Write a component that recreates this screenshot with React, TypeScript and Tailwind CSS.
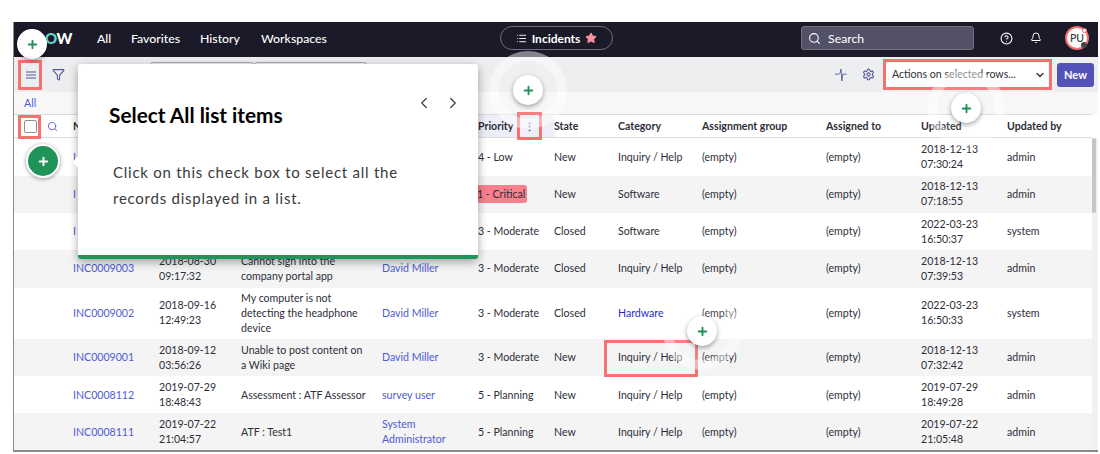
import { Bell, ChevronDown, ChevronLeft, ChevronRight, CircleHelp, Filter, List, Plus, Search, Settings, Star } from "lucide-react"

const cols = "grid grid-cols-[59px_86px_82px_141px_96px_76px_64px_84px_124px_95px_86px_1fr] items-center"

// first three rows sit behind the popover, only their leading letter shows
const rows = [
  { num: "I", opened: "", desc: "", caller: "", priority: "4 - Low", state: "New", category: "Inquiry / Help", updated: "2018-12-13\n07:30:24", by: "admin", h: "h-[38px]" },
  { num: "I", opened: "", desc: "", caller: "", priority: "1 - Critical", state: "New", category: "Software", updated: "2018-12-13\n07:18:55", by: "admin", h: "h-[37px] pb-px" },
  { num: "I", opened: "", desc: "", caller: "", priority: "3 - Moderate", state: "Closed", category: "Software", updated: "2022-03-23\n16:50:37", by: "system", h: "h-[37px]" },
  { num: "INC0009003", opened: "2018-08-30\n09:17:32", desc: "Cannot sign into the\ncompany portal app", caller: "David Miller", priority: "3 - Moderate", state: "Closed", category: "Inquiry / Help", updated: "2018-12-13\n07:39:53", by: "admin", h: "h-[38px] pb-px" },
  { num: "INC0009002", opened: "2018-09-16\n12:49:23", desc: "My computer is not\ndetecting the headphone\ndevice", caller: "David Miller", priority: "3 - Moderate", state: "Closed", category: "Hardware", updated: "2022-03-23\n16:50:33", by: "system", h: "h-[51px] pb-px" },
  { num: "INC0009001", opened: "2018-09-12\n03:56:26", desc: "Unable to post content on\na Wiki page", caller: "David Miller", priority: "3 - Moderate", state: "New", category: "Inquiry / Help", updated: "2018-12-13\n07:32:42", by: "admin", h: "h-[37px]" },
  { num: "INC0008112", opened: "2019-07-29\n18:48:43", desc: "Assessment : ATF Assessor", caller: "survey user", priority: "5 - Planning", state: "New", category: "Inquiry / Help", updated: "2019-07-29\n18:49:28", by: "admin", h: "h-[37px] pt-px" },
  { num: "INC0008111", opened: "2019-07-22\n21:04:57", desc: "ATF : Test1", caller: "System\nAdministrator", priority: "5 - Planning", state: "New", category: "Inquiry / Help", updated: "2019-07-22\n21:05:48", by: "admin", h: "h-[37px] pt-px" },
]

function Hotspot({ className, halo }: { className: string; halo?: boolean }) {
  return (
    <div className={`absolute flex h-[30px] w-[30px] items-center justify-center ${className}`}>
      {halo && <div className="absolute h-[78px] w-[78px] rounded-full border-[10px] border-white/40 bg-white/10" />}
      <div className="relative flex h-[30px] w-[30px] items-center justify-center rounded-full bg-white shadow-[0_2px_5px_rgba(0,0,0,0.35)]">
        <Plus size={13} strokeWidth={3.5} className="text-[#1f9459]" />
      </div>
    </div>
  )
}

export default function App() {
  return (
    <div className="relative h-[454px] w-[1100px] overflow-hidden bg-white pl-[13px] pt-[22px] font-['Lato',sans-serif] text-[10.6px] leading-[15px] text-[#2e2e38]">
      <div className="w-[1085px] border-b-2 border-l border-[#8b8b8b]">
        {/* Top nav */}
        <div className="flex h-[35px] items-center bg-[#1a1a29] pb-[3px] text-[12.3px] font-medium text-white">
          <span className="ml-[31px] w-[52px] text-[15px] font-black tracking-tight text-white">
            <span className="text-[#62d8c4]">O</span>W
          </span>
          <span className="w-[34px]">All</span>
          <span className="w-[69px]">Favorites</span>
          <span className="w-[61px]">History</span>
          <span className="w-[239px]">Workspaces</span>
          <div className="flex h-[24px] w-[113px] items-center justify-center gap-[5px] rounded-full border border-[#6f6f7d] text-[12px] font-bold">
            <List size={11} />
            Incidents
            <Star size={12} className="fill-[#f8929c] text-[#f8929c]" />
          </div>
          <div className="ml-[188px] flex h-[24px] w-[173px] items-center gap-[7px] rounded-[3px] border border-[#6f6f7d] bg-[#535167] pl-[6px] text-[12.3px] font-normal">
            <Search size={13} />
            Search
          </div>
          <CircleHelp size={13} className="ml-[26px]" />
          <Bell size={12} className="ml-[17px]" />
          <div className="relative ml-[23px] flex h-[24px] w-[24px] items-center justify-center rounded-full border-2 border-[#f26d6d] bg-white text-[10.500px] text-[#3a3a3a]">
            PU
            <span className="absolute bottom-0 right-0 h-[6px] w-[6px] rounded-full bg-[#444]" />
            <span className="absolute right-0 top-0 h-[5px] w-[5px] rounded-full border border-[#f26d6d] bg-white" />
          </div>
        </div>

        {/* List toolbar */}
        <div className="flex h-[35px] items-center bg-[#eceef0]">
          <svg viewBox="0 0 10 8" className="ml-[12px] h-[8px] w-[10px] stroke-[#55559a]">
            <path d="M0 1h10M0 4h10M0 7h10" />
          </svg>
          <Filter size={13} className="ml-[16px] text-[#55559a]" />
          <div className="ml-[85px] h-[30px] w-[104px] self-end rounded-t-[3px] border border-[#a9a9b3]" />
          <div className="h-[30px] w-[113px] self-end rounded-t-[3px] border border-[#a9a9b3]" />
          <svg viewBox="0 0 14 14" className="ml-[468px] h-[12px] w-[12px] fill-none stroke-[#55559a]">
            <path d="M0 6h4.500l1.500-1 1-5 1 14 1-8h4.500" />
          </svg>
          <Settings size={13} className="ml-[15px] text-[#55559a]" />
          <div className="ml-[10px] flex h-[24px] w-[165px] items-center justify-between rounded-[2px] bg-white pl-[7px] pr-[4px] text-[#2e2e38]">
            Actions on selected rows...
            <ChevronDown size={12} strokeWidth={2.5} />
          </div>
          <div className="ml-[7px] flex h-[24px] w-[37px] items-center justify-center rounded-[3px] bg-[#5352b8] text-[11px] font-bold text-white">
            New
          </div>
        </div>

        {/* All breadcrumb */}
        <div className="flex h-[22px] items-center bg-[#f7f7f8] pl-[10px] text-[#4f5bd5]">All</div>

        {/* Table */}
        <div className="relative pr-[6px]">
          <div className={`${cols} h-[24px] border-y border-[#dcdce0] font-bold`}>
            <div className="flex items-center pl-[10px]">
              <span className="h-[13px] w-[13px] rounded-[2px] border border-[#8e8e96] bg-white" />
              <Search size={11} className="ml-[10px] text-[#5b5fd0]" />
            </div>
            <span>N</span>
            <span />
            <span />
            <span />
            <div className="flex h-full items-center bg-[#eeeef8]">
              Priority
            </div>
            <span>State</span>
            <span>Category</span>
            <span>Assignment group</span>
            <span>Assigned to</span>
            <span>Updated</span>
            <span>Updated by</span>
          </div>

          {rows.map((r, i) => (
            <div key={i} className={`${cols} ${r.h} ${i % 2 === 1 ? "bg-[#f4f4f5]" : "bg-white"}`}>
              <span />
              <span className="text-[#4f5bd5]">{r.num}</span>
              <span className="whitespace-pre-line">{r.opened}</span>
              <span className="whitespace-pre-line">{r.desc}</span>
              <span className="whitespace-pre-line text-[#4f5bd5]">{r.caller}</span>
              <div>
                {r.priority === "1 - Critical" ? (
                  <span className="-ml-px rounded-[3px] bg-[#f9808d] py-[3px] pr-[2px] text-[#2e2e38]">{r.priority}</span>
                ) : (
                  r.priority
                )}
              </div>
              <span>{r.state}</span>
              <span className={r.category === "Hardware" ? "text-[#2a2ad8]" : ""}>{r.category}</span>
              <span>(empty)</span>
              <span>(empty)</span>
              <span className="whitespace-pre-line">{r.updated}</span>
              <span>{r.by}</span>
            </div>
          ))}

          {/* Scrollbar */}
          <div className="absolute bottom-0 right-0 top-[24px] w-[6px] bg-[#f1f1f2]">
            <div className="h-[75px] w-[4px] rounded-full bg-[#c6c6ca]" />
          </div>
        </div>
      </div>

      {/* Red highlight boxes */}
      <div className="absolute left-[18px] top-[60px] h-[30px] w-[24px] border-[3px] border-[#f87171]" />
      <div className="absolute left-[18px] top-[115px] h-[24px] w-[23px] border-[3px] border-[#f87171]" />
      <div className="absolute left-[517px] top-[112px] flex h-[28px] w-[25px] items-center justify-center border-[3px] border-[#f87171] text-[#55559a]">
        <span className="text-[11px] font-bold leading-none">⋮</span>
      </div>
      <div className="absolute left-[883px] top-[59px] h-[31px] w-[169px] border-[3px] border-[#f87171]" />
      <div className="absolute left-[604px] top-[340px] h-[37px] w-[94px] border-[3px] border-[#f87171]" />

      {/* Hotspots */}
      <Hotspot className="left-[17px] top-[29px]" />
      <Hotspot className="left-[513px] top-[75px]" halo />
      <Hotspot className="left-[951px] top-[93px]" halo />
      <Hotspot className="left-[687px] top-[316px]" halo />
      <div className="absolute left-[26px] top-[144px] flex h-[34px] w-[34px] items-center justify-center rounded-full border-2 border-white bg-[#1f9459] shadow-[0_1px_4px_rgba(0,0,0,0.4)]">
        <Plus size={13} strokeWidth={3.5} className="text-white" />
      </div>

      {/* Popover */}
      <div className="absolute left-[78px] top-[64px] h-[195px] w-[400px] rounded-[3px] border-b-[4px] border-[#1f9459] bg-white pl-[31px] pt-[37px] shadow-[0_3px_10px_rgba(0,0,0,0.35)]">
        <div className="absolute left-[-4px] top-[94px] h-[8px] w-[8px] rotate-45 bg-white" />
        <div className="flex items-center">
          <h2 className="w-[306px] text-[20.800px] font-bold leading-[28px] text-black">Select All list items</h2>
          <ChevronLeft size={18} strokeWidth={1.7} className="-mt-[24px] text-[#444]" />
          <ChevronRight size={18} strokeWidth={1.7} className="-mt-[24px] ml-[11px] text-[#444]" />
        </div>
        <p className="ml-[4px] mt-[30px] text-[15px] leading-[26px] tracking-[0.75px] text-[#3a3a3a]">
          Click on this check box to select all the
          <br />
          records displayed in a list.
        </p>
      </div>
    </div>
  )
}
